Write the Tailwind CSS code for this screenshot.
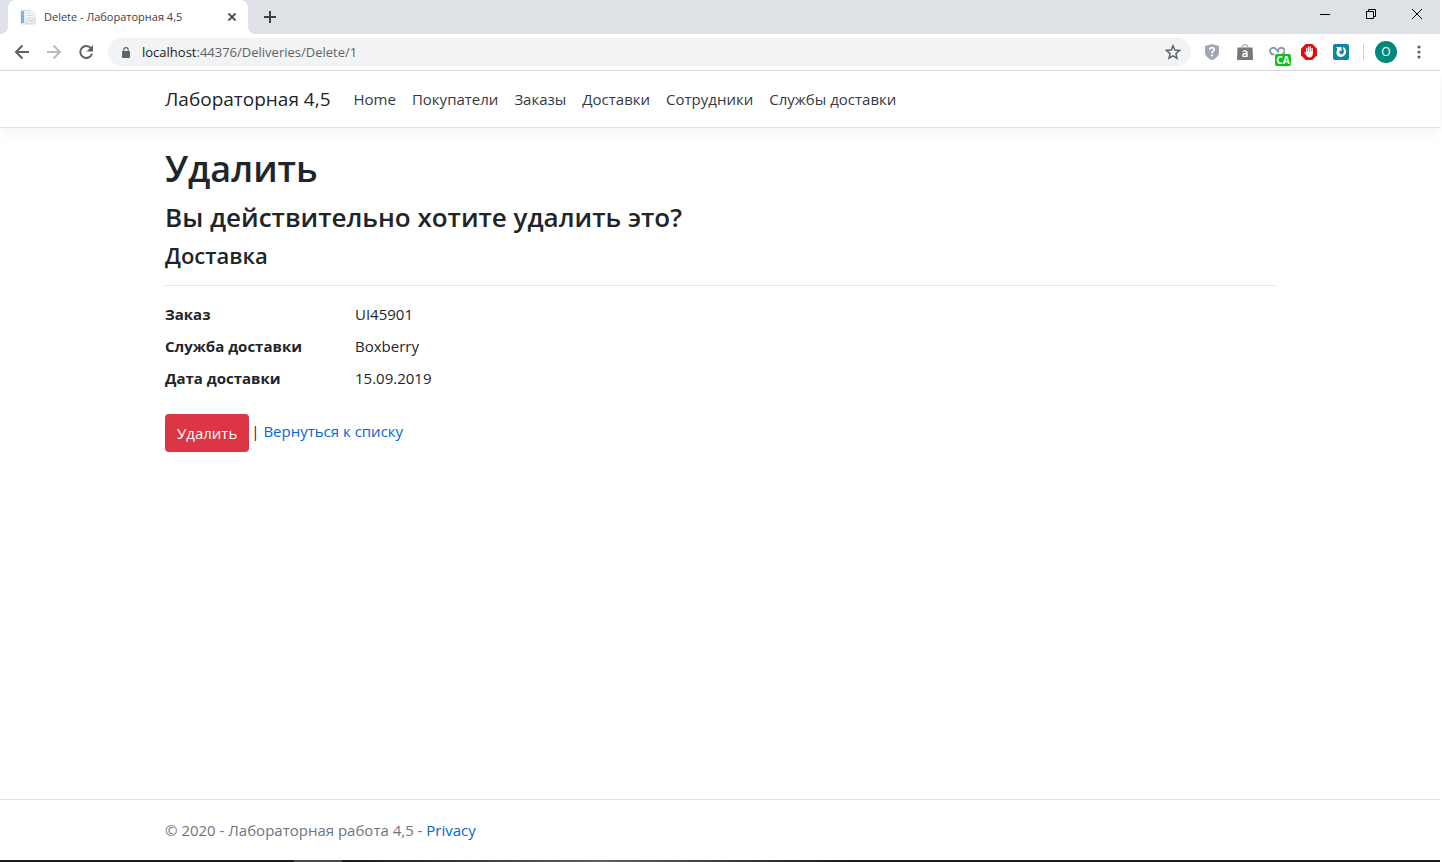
<!DOCTYPE html>
<html lang="ru">
<head>
<meta charset="utf-8">
<meta name="viewport" content="width=device-width, initial-scale=1">
<title>Delete - Лабораторная 4,5</title>
<script src="https://cdn.jsdelivr.net/npm/@tailwindcss/browser@4"></script>
</head>
<body class="flex min-h-screen flex-col bg-white pr-[2px] font-['Open_Sans','Noto_Sans',sans-serif] text-[15px] leading-6 text-[#212529]">

<!-- Tab strip -->
<div class="flex h-[34px] shrink-0 bg-[#dee1e6]">
  <div class="relative ml-2 flex w-60 items-center rounded-t-lg bg-white pl-3 pr-2 text-[#3c4043]">
    <span class="absolute -left-2 bottom-0 size-2 bg-[radial-gradient(circle_at_0_0,#dee1e6_8px,#fff_8px)]"></span>
    <span class="absolute -right-2 bottom-0 size-2 bg-[radial-gradient(circle_at_100%_0,#dee1e6_8px,#fff_8px)]"></span>
    <svg class="size-4 shrink-0" viewBox="0 0 16 16"><path d="M1 1h10v14H1z" fill="#eef1f5" stroke="#d3d7dc" stroke-width=".7"/><path d="M1 2h3v12H1z" fill="#7fb2d6"/><path d="M5 1.500h7l3 3V14H5z" fill="#f4f6f9" stroke="#dcdfe3" stroke-width=".8"/><path d="M7 4h4M7 6.500h6" stroke="#d3d8de"/><path d="M7 9h8v6H7z" fill="#e9edf1" stroke="#cbd0d6" stroke-width=".7"/><path d="M9 12h4" stroke="#bfc6cd"/></svg>
    <span class="ml-2 flex-1 whitespace-nowrap text-[11px]">Delete - Лабораторная 4,5</span>
    <button class="flex size-4 items-center justify-center" aria-label="Закрыть вкладку"><svg class="size-2" viewBox="0 0 8 8"><path d="M.5.5l7 7M7.500.5l-7 7" stroke="#3c4043" stroke-width="1.700"/></svg></button>
  </div>
  <button class="ml-3 flex w-5 items-center justify-center" aria-label="Новая вкладка"><svg class="size-3" viewBox="0 0 12 12"><path d="M6 0v12M0 6h12" stroke="#3c4043" stroke-width="2"/></svg></button>
  <div class="ml-auto flex h-7 text-black">
    <button class="flex w-[46px] items-center justify-center" aria-label="Свернуть"><svg class="size-[10px]" viewBox="0 0 10 10"><path d="M0 5.500h10" stroke="currentColor"/></svg></button>
    <button class="flex w-[46px] items-center justify-center" aria-label="Восстановить"><svg class="size-[10px]" viewBox="0 0 10 10" fill="none" stroke="currentColor"><path d="M.5 2.500h7v7h-7zM2.500 2.500v-2h7v7h-2"/></svg></button>
    <button class="flex w-[46px] items-center justify-center" aria-label="Закрыть"><svg class="size-[10px]" viewBox="0 0 10 10"><path d="M0 0l10 10M10 0L0 10" stroke="currentColor"/></svg></button>
  </div>
</div>

<!-- Toolbar -->
<div class="flex h-[37px] shrink-0 items-center border-b border-[#d9dadc] bg-white pl-[14px] pr-[13px]">
  <button aria-label="Назад"><svg class="size-4" viewBox="0 0 16 16" fill="none" stroke="#5f6368" stroke-width="2"><path d="M15 8H2M8.500 1.500L2 8l6.500 6.500"/></svg></button>
  <button class="ml-4" aria-label="Вперёд"><svg class="size-4" viewBox="0 0 16 16" fill="none" stroke="#bababa" stroke-width="2"><path d="M1 8h13M7.500 1.500L14 8l-6.500 6.500"/></svg></button>
  <button class="ml-4" aria-label="Обновить"><svg class="size-4" viewBox="0 0 16 16"><path d="M13 4.200A6 6 0 1 0 14 9.800" fill="none" stroke="#5f6368" stroke-width="2"/><path d="M15 1v6.500H8.500z" fill="#5f6368"/></svg></button>
  <div class="ml-[14px] flex h-7 flex-1 items-center rounded-full bg-[#f1f3f4] pl-[14px] pr-[10px]">
    <svg class="h-[11px] w-2" viewBox="0 0 8 11"><rect y="4" width="8" height="7" rx="1" fill="#5f6368"/><path d="M1.800 4.500V2.800a2.200 2.200 0 0 1 4.400 0v1.700" fill="none" stroke="#5f6368" stroke-width="1.100"/></svg>
    <div class="ml-3 flex-1 text-[13px] text-[#5f6368]"><span class="text-[#202124]">localhost</span>:44376/Deliveries/Delete/1</div>
    <button aria-label="Добавить в закладки"><svg class="size-4" viewBox="0 0 16 16"><path d="M8 1.800l1.800 4.300 4.700.4-3.600 3.100 1.100 4.600L8 11.800l-4 2.400 1.100-4.600-3.600-3.100 4.700-.4z" fill="none" stroke="#5f6368" stroke-width="1.500"/></svg></button>
  </div>
  <button class="ml-[13px]" aria-label="Защита"><svg class="size-4" viewBox="0 0 16 16"><path d="M8 0l7 2v6c0 4-3 6.500-7 8-4-1.500-7-4-7-8V2z" fill="#a2a7b8"/><path d="M5.800 5.700c0-3 4.600-2.700 4.400-.2C10.100 7 8 7 8 9.200" fill="none" stroke="#fff" stroke-width="1.700"/><circle cx="8" cy="11.500" r="1.100" fill="#fff"/></svg></button>
  <button class="ml-[17px]" aria-label="Покупки"><svg class="size-4" viewBox="0 0 16 16"><path d="M0.500 3.500h15L16 16H0z" fill="#777"/><path d="M5 5V3a3 2.500 0 0 1 6 0v2" fill="none" stroke="#999"/><path d="M5.800 7.500c1-.8 4.200-1 4.200 1V13M10 9.700c-2-.3-4.200-.2-4.200 1.600 0 2 3.700 1.700 4.200-.3" fill="none" stroke="#fff" stroke-width="1.400"/></svg></button>
  <button class="relative ml-4 size-4" aria-label="CA"><svg class="size-4" viewBox="0 0 16 16"><path d="M5.500 10.200A3.300 3.300 0 1 1 7 5l3 3.500M8 7.500l1.500-2.300A3.300 3.300 0 1 1 13 10.200" fill="none" stroke="#8f9ba3" stroke-width="1.900"/></svg><span class="absolute left-[6px] top-[10px] flex h-3 w-4 items-center justify-center rounded-[2px] bg-[#0ec01e] text-[10px] font-bold leading-3 text-white">CA</span></button>
  <button class="ml-4" aria-label="Блокировщик"><svg class="size-4" viewBox="0 0 16 16"><path d="M4.700 0h6.600L16 4.700v6.600L11.300 16H4.700L0 11.300V4.700z" fill="#e80a0a"/><path d="M5.700 4.500V9M7.500 3v5M9.300 3v5M11.100 4.500V9" stroke="#fff" stroke-width="1.300" stroke-linecap="round"/><path d="M5 7.500h6.800V10c0 4-5 4.500-6.300 1.500L3.300 8.700c.4-.8 1.200-.5 1.900.5z" fill="#fff"/></svg></button>
  <button class="ml-4" aria-label="Синхронизация"><svg class="size-4" viewBox="0 0 16 16"><rect width="16" height="16" rx="2" fill="#0e86a4"/><path d="M3 3h5.500v4.500L6.800 6.200C5.800 8 6.500 10 8.500 10.500 11 10 11.800 7 9.800 4.300L10.500 3C14.500 5 14 12.500 8 13 3.500 12.700 2.200 8.500 4.600 4.900z" fill="#fff"/></svg></button>
  <span class="ml-[14px] h-4 w-px bg-[#cfd1d4]"></span>
  <button class="ml-[11px] flex size-[22px] items-center justify-center rounded-full bg-[#00897b] text-[12px] text-white">O</button>
  <button class="ml-[14px]" aria-label="Меню"><svg class="size-4" viewBox="0 0 16 16" fill="#5f6368"><circle cx="8" cy="3" r="1.600"/><circle cx="8" cy="8" r="1.600"/><circle cx="8" cy="13" r="1.600"/></svg></button>
</div>

<header class="border-b border-[#dee2e6] bg-white py-2 shadow-[0_4px_12px_rgba(0,0,0,0.05)]">
  <nav class="mx-auto flex h-10 w-full max-w-[1140px] items-center px-[15px]">
    <a href="#" class="mr-[15px] text-[19px] leading-7">Лабораторная 4,5</a>
    <a href="#" class="px-2 text-[#343a40]">Home</a>
    <a href="#" class="px-2 text-[#343a40]">Покупатели</a>
    <a href="#" class="px-2 text-[#343a40]">Заказы</a>
    <a href="#" class="px-2 text-[#343a40]">Доставки</a>
    <a href="#" class="px-2 text-[#343a40]">Сотрудники</a>
    <a href="#" class="px-2 text-[#343a40]">Службы доставки</a>
  </nav>
</header>

<main class="mx-auto w-full max-w-[1140px] flex-1 px-[15px] pt-[17px]">
  <h1 class="mb-2 text-[36px] font-semibold leading-12">Удалить</h1>
  <h3 class="mb-2 text-[26px] font-semibold leading-8">Вы действительно хотите удалить это?</h3>
  <h4 class="text-[22px] font-semibold leading-7">Доставка</h4>
  <hr class="my-4 border-[#e5e5e5]">
  <dl class="grid grid-cols-6 gap-x-[30px] gap-y-2">
    <dt class="font-bold whitespace-nowrap">Заказ</dt><dd class="col-span-5">UI45901</dd>
    <dt class="font-bold whitespace-nowrap">Служба доставки</dt><dd class="col-span-5">Boxberry</dd>
    <dt class="font-bold whitespace-nowrap">Дата доставки</dt><dd class="col-span-5">15.09.2019</dd>
  </dl>
  <form class="mt-6 flex items-start gap-[2px]">
    <button type="button" class="h-[38px] rounded bg-[#dc3545] px-3 text-white">Удалить</button>
    <span class="pt-[5px]">| <a href="#" class="text-[#0366d6]">Вернуться к списку</a></span>
  </form>
</main>

<footer class="border-t border-[#dee2e6] text-[#6c757d]">
  <div class="mx-auto h-[60px] w-full max-w-[1140px] px-[15px] py-[18px]">© 2020 - Лабораторная работа 4,5 - <a href="#" class="text-[#0366d6]">Privacy</a></div>
</footer>
<!-- Top edge of the taskbar -->
<div class="flex h-[2px] bg-[#1a1a1a]">
  <div class="ml-[294px] w-12 bg-[#4a4a4a]"></div>
  <div class="w-[520px] bg-linear-to-r from-[#1a1a1a] via-[#606060] to-[#1a1a1a]"></div>
</div>
</body>
</html>
